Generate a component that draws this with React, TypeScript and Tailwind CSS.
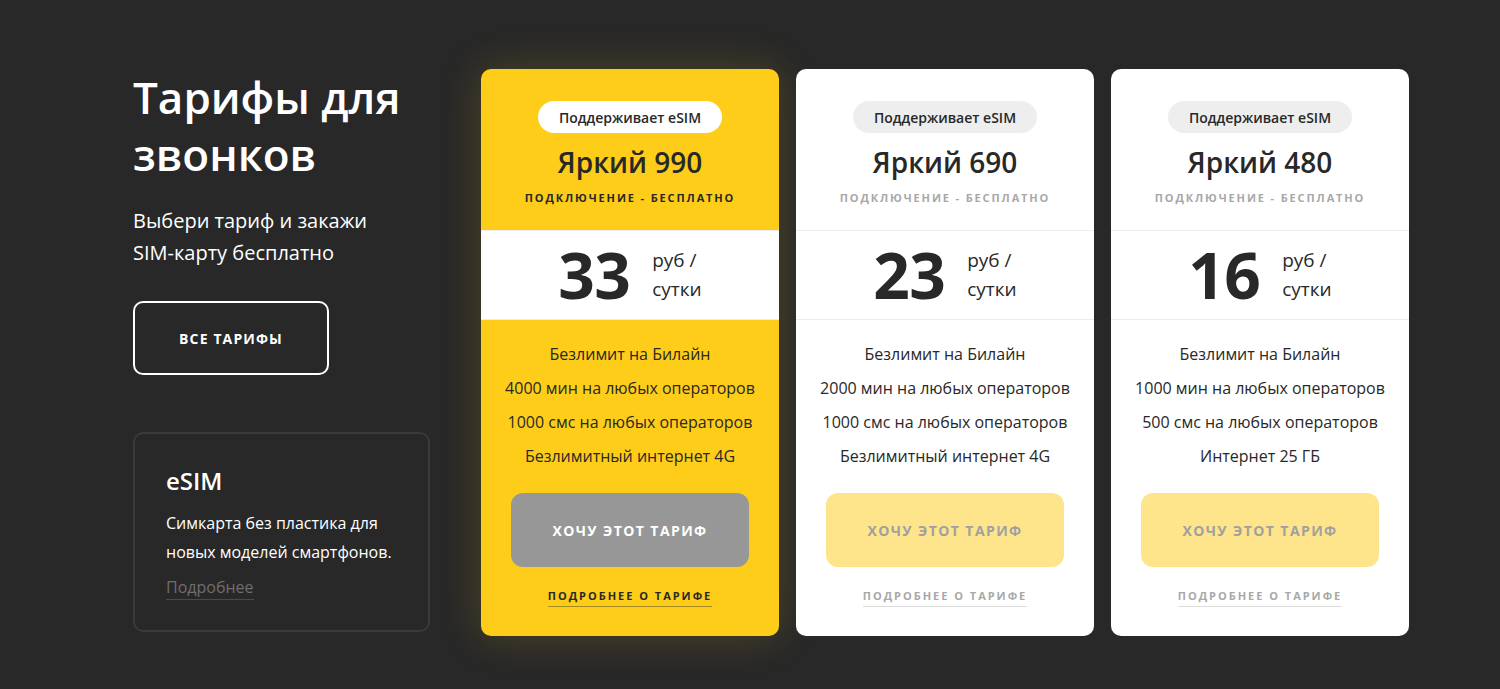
const font = { fontFamily: '"Open Sans", "Noto Sans", sans-serif' };

type Plan = {
  name: string;
  price: string;
  features: string[];
  active?: boolean;
};

const plans: Plan[] = [
  {
    name: 'Яркий 990',
    price: '33',
    features: [
      'Безлимит на Билайн',
      '4000 мин на любых операторов',
      '1000 смс на любых операторов',
      'Безлимитный интернет 4G',
    ],
    active: true,
  },
  {
    name: 'Яркий 690',
    price: '23',
    features: [
      'Безлимит на Билайн',
      '2000 мин на любых операторов',
      '1000 смс на любых операторов',
      'Безлимитный интернет 4G',
    ],
  },
  {
    name: 'Яркий 480',
    price: '16',
    features: [
      'Безлимит на Билайн',
      '1000 мин на любых операторов',
      '500 смс на любых операторов',
      'Интернет 25 ГБ',
    ],
  },
];

function PlanCard({ plan }: { plan: Plan }) {
  const active = plan.active;
  return (
    <div
      className={`w-[298px] h-[567px] rounded-[10px] overflow-hidden flex flex-col ${
        active ? 'bg-[#fecd1a] shadow-[0_0_40px_rgba(254,205,26,0.18)]' : 'bg-white'
      }`}
    >
      {/* Header */}
      <div className="h-[161px] flex flex-col items-center pt-[32px]">
        <span
          className={`h-[32px] px-[21px] rounded-full flex items-center text-[14px] font-semibold text-[#282828] ${
            active ? 'bg-white' : 'bg-[#eeeeee]'
          }`}
        >
          Поддерживает eSIM
        </span>
        <h3 className="mt-[10px] text-[28px] leading-[38px] font-semibold text-[#282828]">{plan.name}</h3>
        <p
          className={`mt-[9px] text-[11px] font-bold tracking-[0.17em] ${
            active ? 'text-[#282828]' : 'text-[#a8a8a8]'
          }`}
        >
          ПОДКЛЮЧЕНИЕ - БЕСПЛАТНО
        </p>
      </div>

      {/* Price */}
      <div className="h-[90px] bg-white border-y border-[#ededed] flex items-center justify-center gap-[22px]">
        <span className="text-[64px] leading-none font-bold text-[#282828] tracking-[-0.01em]">{plan.price}</span>
        <span className="text-[19px] leading-[29px] text-[#282828]">
          руб /
          <br />
          сутки
        </span>
      </div>

      {/* Features */}
      <ul className="pt-[22px] flex flex-col items-center gap-[10px] text-[16px] leading-[24px] text-[#282828]">
        {plan.features.map((f) => (
          <li key={f}>{f}</li>
        ))}
      </ul>

      <div className="px-[30px] mt-[25px]">
        <button
          className={`w-full h-[74px] rounded-[12px] text-[14px] font-bold tracking-[0.1em] ${
            active ? 'bg-[#979797] text-white' : 'bg-[#fee58b] text-[#a0a0a0]'
          }`}
        >
          ХОЧУ ЭТОТ ТАРИФ
        </button>
      </div>

      <div className="mt-[21px] flex justify-center">
        <a
          className={`text-[11px] font-bold tracking-[0.18em] pb-[1px] border-b ${
            active ? 'text-[#282828] border-[#a58a1e]' : 'text-[#a8a8a8] border-[#dddddd]'
          }`}
        >
          ПОДРОБНЕЕ О ТАРИФЕ
        </a>
      </div>
    </div>
  );
}

export default function App() {
  return (
    <main className="min-h-screen w-full bg-[#282828] pl-[133px] pt-[69px]" style={font}>
      <div className="flex gap-[51px]">
        {/* Left column */}
        <div className="w-[297px] flex flex-col">
          <h1 className="text-[44px] leading-[57px] font-semibold text-white">
            Тарифы для
            <br />
            звонков
          </h1>
          <p className="mt-[22px] text-[20px] leading-[32px] text-white">
            Выбери тариф и закажи
            <br />
            SIM-карту бесплатно
          </p>
          <button className="mt-[32px] w-[196px] h-[74px] rounded-[10px] border-2 border-white text-white text-[14px] font-bold tracking-[0.08em]">
            ВСЕ ТАРИФЫ
          </button>
          <div className="mt-[57px] h-[200px] rounded-[10px] border-2 border-[#3a3a3a] px-[31px] pt-[31px]">
            <h2 className="text-[24px] leading-[32px] font-semibold text-white">eSIM</h2>
            <p className="mt-[12px] text-[16px] leading-[29px] text-white">
              Симкарта без пластика для
              <br />
              новых моделей смартфонов.
            </p>
            <a className="mt-[8px] inline-block text-[16px] leading-[24px] text-[#6e6e6e] border-b border-[#4a4a4a]">
              Подробнее
            </a>
          </div>
        </div>

        {/* Cards */}
        <div className="flex gap-[17px]">
          {plans.map((p) => (
            <PlanCard key={p.name} plan={p} />
          ))}
        </div>
      </div>
    </main>
  );
}
